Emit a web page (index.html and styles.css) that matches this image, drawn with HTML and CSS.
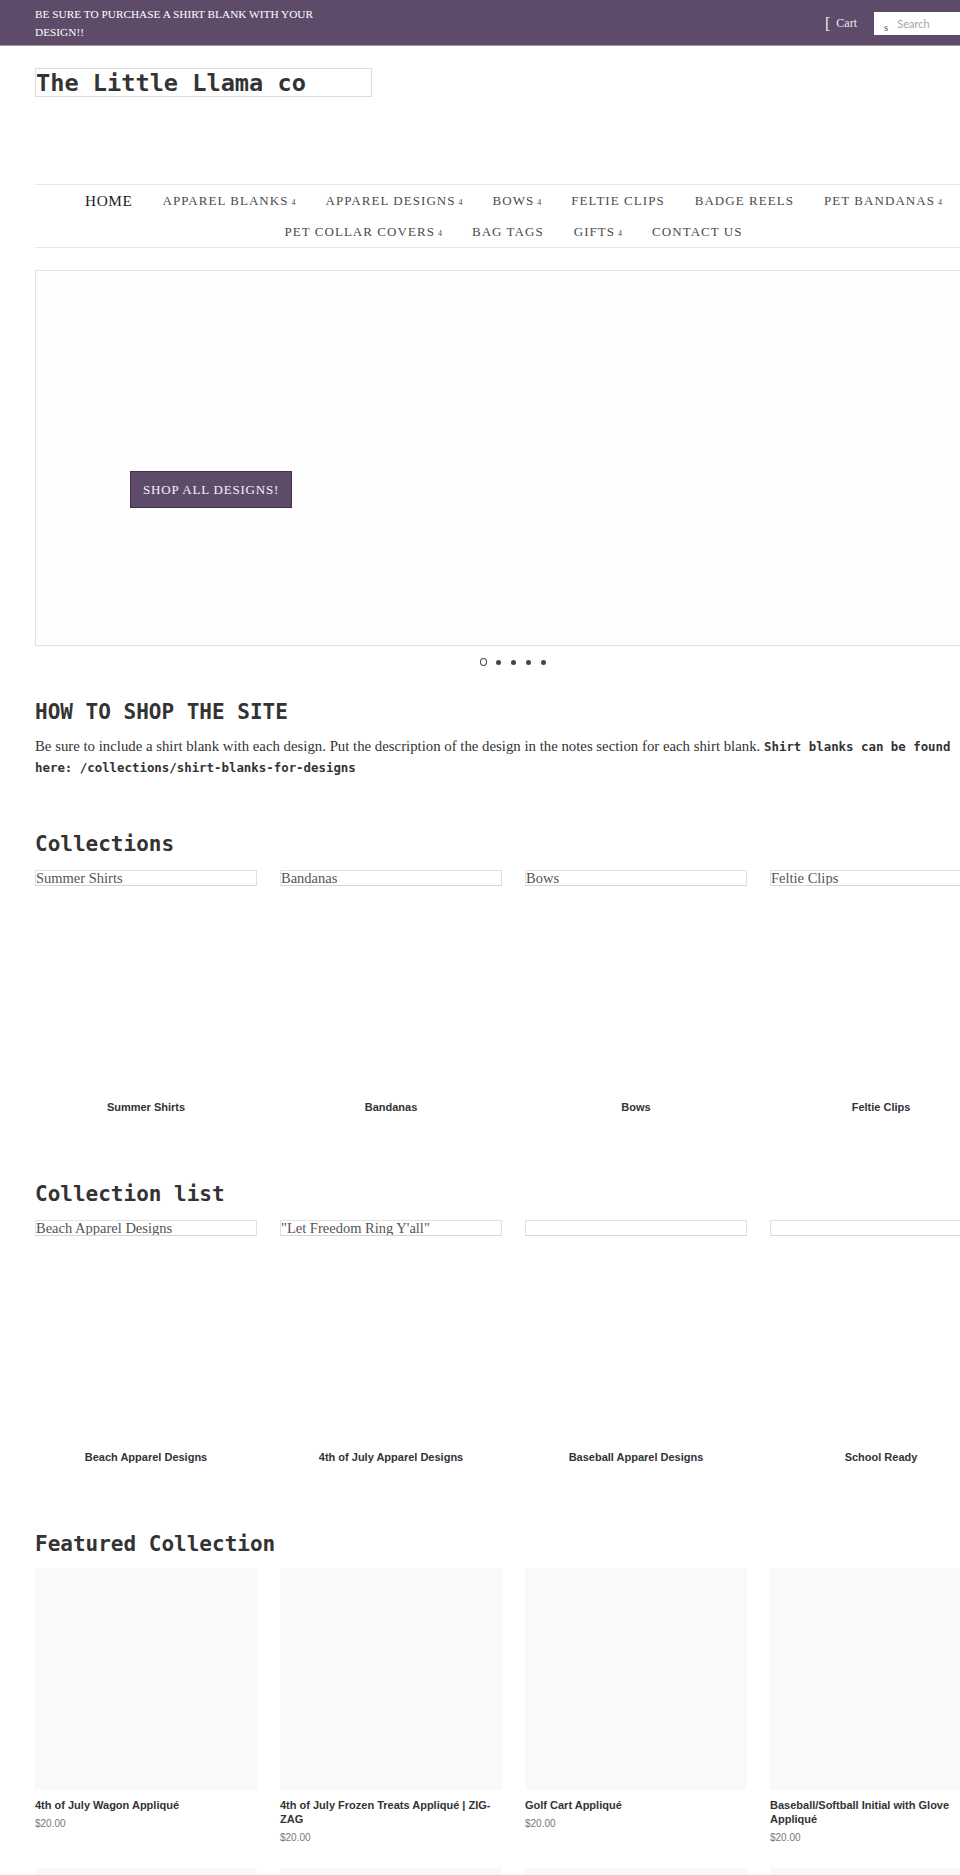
FILE: index.html
```html
<!DOCTYPE html>
<html lang="en">
<head>
    <meta charset="UTF-8">
    <meta name="viewport" content="width=device-width, initial-scale=1.0">
    <title>The Little Llama co</title>
    <link rel="stylesheet" href="styles.css">
</head>
<body>
    <div class="announce">
        <div class="wrapper announce-inner">
            <p class="announce-msg">Be sure to purchase a shirt blank with your design!!</p>
            <div class="bar-tools">
                <a href="#" class="cart-link"><span class="cart-icon">[</span>Cart</a>
                <form class="search">
                    <span class="search-icon">s</span>
                    <input type="search" placeholder="Search">
                </form>
            </div>
        </div>
    </div>

    <div class="wrapper">
        <header class="site-header">
            <a href="#" class="logo">The Little Llama co</a>
        </header>

        <ul class="site-nav">
            <li><a href="#" class="active">Home</a></li>
            <li><a href="#">Apparel Blanks<span class="arrow">4</span></a></li>
            <li><a href="#">Apparel Designs<span class="arrow">4</span></a></li>
            <li><a href="#">Bows<span class="arrow">4</span></a></li>
            <li><a href="#">Feltie Clips</a></li>
            <li><a href="#">Badge Reels</a></li>
            <li><a href="#">Pet Bandanas<span class="arrow">4</span></a></li>
            <li><a href="#">Pet Collar Covers<span class="arrow">4</span></a></li>
            <li><a href="#">Bag Tags</a></li>
            <li><a href="#">Gifts<span class="arrow">4</span></a></li>
            <li><a href="#">Contact Us</a></li>
        </ul>

        <div class="hero">
            <a href="#" class="hero-btn">Shop all designs!</a>
        </div>
        <div class="dots">
            <span class="dot ring"></span>
            <span class="dot"></span>
            <span class="dot"></span>
            <span class="dot"></span>
            <span class="dot"></span>
        </div>

        <h2 class="section-title first">HOW TO SHOP THE SITE</h2>
        <p class="intro">Be sure to include a shirt blank with each design. Put the description of the design in the notes section for each shirt blank. <strong>Shirt blanks can be found here: /collections/shirt-blanks-for-designs</strong></p>

        <h2 class="section-title">Collections</h2>
        <div class="grid">
            <div class="coll-item">
                <div class="coll-image"><div class="alt-box">Summer Shirts</div></div>
                <p class="coll-title">Summer Shirts</p>
            </div>
            <div class="coll-item">
                <div class="coll-image"><div class="alt-box">Bandanas</div></div>
                <p class="coll-title">Bandanas</p>
            </div>
            <div class="coll-item">
                <div class="coll-image"><div class="alt-box">Bows</div></div>
                <p class="coll-title">Bows</p>
            </div>
            <div class="coll-item">
                <div class="coll-image"><div class="alt-box">Feltie Clips</div></div>
                <p class="coll-title">Feltie Clips</p>
            </div>
        </div>

        <h2 class="section-title spaced">Collection list</h2>
        <div class="grid">
            <div class="coll-item">
                <div class="coll-image"><div class="alt-box">Beach Apparel Designs</div></div>
                <p class="coll-title">Beach Apparel Designs</p>
            </div>
            <div class="coll-item">
                <div class="coll-image"><div class="alt-box">"Let Freedom Ring Y'all"</div></div>
                <p class="coll-title">4th of July Apparel Designs</p>
            </div>
            <div class="coll-item">
                <div class="coll-image"><div class="alt-box"></div></div>
                <p class="coll-title">Baseball Apparel Designs</p>
            </div>
            <div class="coll-item">
                <div class="coll-image"><div class="alt-box"></div></div>
                <p class="coll-title">School Ready</p>
            </div>
        </div>

        <h2 class="section-title spaced products-title">Featured Collection</h2>
        <div class="grid products">
            <div class="product">
                <div class="prod-image"></div>
                <p class="prod-title">4th of July Wagon Appliqué</p>
                <p class="price">$20.00</p>
            </div>
            <div class="product">
                <div class="prod-image"></div>
                <p class="prod-title">4th of July Frozen Treats Appliqué | ZIG-ZAG</p>
                <p class="price">$20.00</p>
            </div>
            <div class="product">
                <div class="prod-image"></div>
                <p class="prod-title">Golf Cart Appliqué</p>
                <p class="price">$20.00</p>
            </div>
            <div class="product">
                <div class="prod-image"></div>
                <p class="prod-title">Baseball/Softball Initial with Glove Appliqué</p>
                <p class="price">$20.00</p>
            </div>
            <div class="product"><div class="prod-image"></div></div>
            <div class="product"><div class="prod-image"></div></div>
            <div class="product"><div class="prod-image"></div></div>
            <div class="product"><div class="prod-image"></div></div>
        </div>
    </div>
</body>
</html>
```

FILE: styles.css
```css
html {
    overflow-x: hidden;
}
body {
    margin: 0;
    font-family: "Liberation Serif", serif;
    color: #333;
    background: #fff;
}
.wrapper {
    width: 957px;
    margin-left: 35px;
}

/* announcement bar */
.announce {
    background: #5e4b6a;
    border-bottom: 1px solid #a39aaa;
    height: 45px;
}
.announce-inner {
    display: flex;
    justify-content: space-between;
    align-items: flex-start;
}
.announce-msg {
    width: 310px;
    margin: 6px 0 0;
    font-size: 11.3px;
    line-height: 17.6px;
    color: #fff;
    text-transform: uppercase;
}
.bar-tools {
    display: flex;
    align-items: center;
    margin-top: 12px;
}
.cart-link {
    display: flex;
    align-items: center;
    gap: 6px;
    margin-right: 17px;
    color: #f0eaf3;
    font-size: 12px;
    text-decoration: none;
}
.cart-icon {
    font-size: 16px;
}
.search {
    display: flex;
    align-items: center;
    width: 118px;
    height: 23px;
    background: #fff;
    margin: 0;
}
.search-icon {
    margin: 6px 0 0 10px;
    font-size: 11px;
    color: #555;
}
.search input {
    width: 80px;
    border: none;
    outline: none;
    padding: 0 0 0 9px;
    font-family: "Lato", sans-serif;
    font-size: 11px;
    background: transparent;
}
.search input::placeholder {
    color: #a5a5a5;
}

/* header */
.site-header {
    padding-top: 22px;
}
.logo {
    display: block;
    width: 335px;
    height: 27px;
    border: 1px solid #ddd;
    font-family: "DejaVu Sans Mono", monospace;
    font-weight: bold;
    font-size: 23.6px;
    line-height: 28px;
    color: #333;
    text-decoration: none;
    overflow: hidden;
    white-space: nowrap;
}

/* navigation */
.site-nav {
    display: flex;
    flex-wrap: wrap;
    justify-content: center;
    list-style: none;
    margin: 87px 0 0;
    padding: 0;
    border-top: 1px solid #e6e6e6;
    border-bottom: 1px solid #e6e6e6;
}
.site-nav li {
    height: 31px;
    overflow: hidden;
}
.site-nav a {
    display: block;
    padding: 0 15px;
    line-height: 31px;
    font-size: 13px;
    letter-spacing: 1.05px;
    color: #4a4a4a;
    text-transform: uppercase;
    text-decoration: none;
}
.site-nav a.active {
    font-size: 15.3px;
    letter-spacing: 0.6px;
    color: #222;
}
.arrow {
    font-size: 8px;
    line-height: 0;
    margin-left: 3px;
    letter-spacing: 0;
}

/* slideshow */
.hero {
    margin-top: 22px;
    height: 376px;
    border: 1px solid #e3e3e3;
    background: #fefefe;
    padding: 200px 0 0 94px;
    box-sizing: border-box;
}
.hero-btn {
    display: inline-block;
    padding: 0 12px;
    line-height: 35px;
    border: 1px solid #3f3249;
    background: #5e4b6a;
    color: #f6f2f8;
    font-size: 13px;
    letter-spacing: 0.8px;
    text-transform: uppercase;
    text-decoration: none;
}
.dots {
    display: flex;
    justify-content: center;
    align-items: center;
    height: 10px;
    margin-top: 11px;
}
.dot {
    width: 15px;
    display: flex;
    justify-content: center;
}
.dot::before {
    content: "";
    width: 5px;
    height: 5px;
    border-radius: 50%;
    background: #4b3f56;
}
.dot.ring::before {
    width: 5px;
    height: 6px;
    background: transparent;
    border: 1.5px solid #4b3f56;
}

/* sections */
.section-title {
    font-family: "DejaVu Sans Mono", monospace;
    font-weight: bold;
    font-size: 21px;
    line-height: 26px;
    margin: 53px 0 13px;
    color: #333;
}
.section-title.first {
    margin: 32px 0 11px;
}
.section-title.spaced {
    margin-top: 66px;
}
.section-title.products-title {
    margin-bottom: 11px;
}
.intro {
    margin: 0;
    font-size: 14.8px;
    line-height: 20px;
}
.intro strong {
    font-family: "DejaVu Sans Mono", monospace;
    font-size: 12.4px;
    line-height: 20px;
}

.grid {
    display: grid;
    grid-template-columns: repeat(4, 222px);
    column-gap: 23px;
}
.coll-image {
    height: 222px;
}
.alt-box {
    height: 14px;
    border: 1px solid #e2e2e2;
    border-bottom-color: #d6d6d6;
    font-size: 14.5px;
    line-height: 15px;
    color: #555;
    overflow: hidden;
    white-space: nowrap;
}
.coll-title {
    margin: 7px 0 0;
    text-align: center;
    font-family: "Liberation Sans", sans-serif;
    font-weight: bold;
    font-size: 11px;
    line-height: 16px;
}

.products {
    row-gap: 23px;
}
.prod-image {
    height: 222px;
    background: #f9f9f9;
}
.prod-title {
    margin: 8px 0 0;
    font-family: "Liberation Sans", sans-serif;
    font-weight: bold;
    font-size: 11px;
    line-height: 14px;
}
.price {
    margin: 5px 0 0;
    font-family: "Liberation Sans", sans-serif;
    font-size: 10px;
    line-height: 14px;
    color: #777;
}
```
